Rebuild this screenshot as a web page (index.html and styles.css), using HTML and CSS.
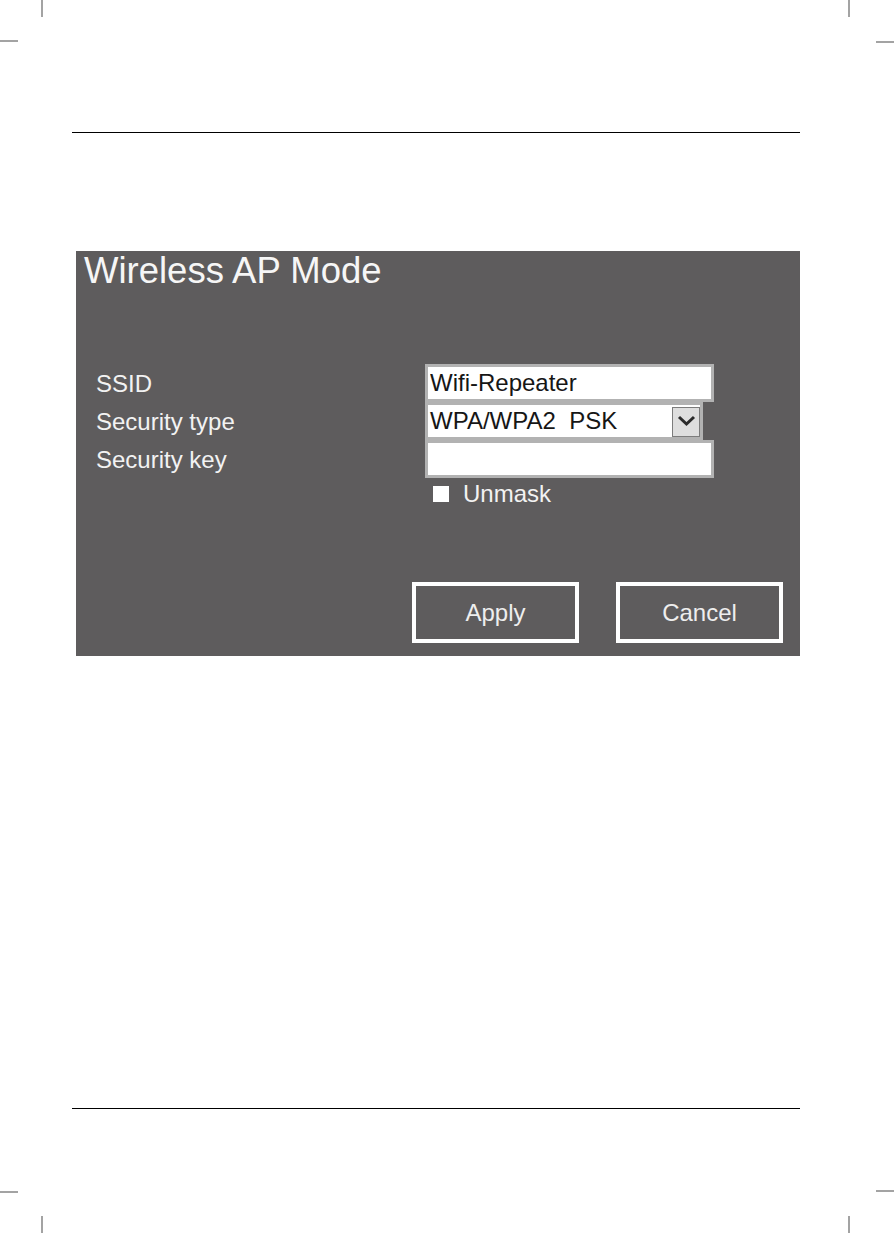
FILE: index.html
```html
<!DOCTYPE html>
<html lang="en">
<head>
  <meta charset="UTF-8" />
  <meta name="viewport" content="width=device-width, initial-scale=1.0"/>
  <title>Wireless AP Mode</title>
  <link rel="stylesheet" href="styles.css">
</head>
<body>
  <!-- crop marks at the corners of the printed page -->
  <span class="mark mark-v tl-v"></span>
  <span class="mark mark-h tl-h"></span>
  <span class="mark mark-v tr-v"></span>
  <span class="mark mark-h tr-h"></span>
  <span class="mark mark-h bl-h"></span>
  <span class="mark mark-v bl-v"></span>
  <span class="mark mark-h br-h"></span>
  <span class="mark mark-v br-v"></span>

  <div class="sheet">
    <div class="rule"></div>

    <div class="panel">
      <h1 class="panel-title">Wireless AP Mode</h1>

      <form class="ap-form" id="apForm">
        <label class="label" for="ssid">SSID</label>
        <input class="field" type="text" id="ssid" value="Wifi-Repeater" />

        <label class="label">Security type</label>
        <div class="select">
          <span class="select-value">WPA/WPA2&nbsp;&nbsp;PSK</span>
          <span class="select-arrow">
            <svg width="28" height="30" viewBox="0 0 28 30">
              <polyline points="7,10 14.5,17 22,10" fill="none" stroke="#2b2b2b" stroke-width="3"/>
            </svg>
          </span>
        </div>

        <label class="label" for="key">Security key</label>
        <input class="field" type="password" id="key" value="" />

        <div class="unmask">
          <span class="check"></span>
          <span>Unmask</span>
        </div>
      </form>

      <div class="buttons">
        <button type="button" class="btn">Apply</button>
        <button type="button" class="btn">Cancel</button>
      </div>
    </div>

    <div class="rule rule-bottom"></div>
  </div>
</body>
</html>
```

FILE: styles.css
```css
body {
  margin: 0;
  width: 894px;
  height: 1233px;
  position: relative;
  background: #fff;
  font-family: "Liberation Sans", Arial, sans-serif;
  overflow: hidden;
}

.mark {
  position: absolute;
  background: #a3a3a3;
}

.mark-v {
  width: 2px;
  height: 17px;
}

.mark-h {
  width: 18px;
  height: 2px;
}

.tl-v { left: 41px; top: 0; }
.tl-h { left: 0; top: 40px; }
.tr-v { left: 848px; top: 0; }
.tr-h { left: 876px; top: 41px; }
.bl-h { left: 0; top: 1191px; }
.bl-v { left: 41px; top: 1216px; }
.br-h { left: 876px; top: 1190px; }
.br-v { left: 848px; top: 1216px; }

.sheet {
  padding: 132px 0 0 72px;
}

.rule {
  width: 728px;
  height: 1px;
  background: #000;
}

.rule-bottom {
  margin-top: 452px;
}

.panel {
  margin: 118px 0 0 4px;
  width: 724px;
  height: 405px;
  box-sizing: border-box;
  padding: 0 0 0 20px;
  background: #5e5c5d;
  color: #f2f2f2;
}

.panel-title {
  margin: 0 0 0 -12px;
  font-size: 36.5px;
  font-weight: normal;
  line-height: 40px;
  color: #f6f6f6;
}

.ap-form {
  margin-top: 73px;
  display: grid;
  grid-template-columns: 329px 289px;
  grid-template-rows: 38px 38px 38px 29px;
}

.label {
  font-size: 24px;
  line-height: 38px;
  padding-top: 1px;
}

.field {
  box-sizing: border-box;
  width: 289px;
  height: 38px;
  margin: 0;
  padding: 0 0 0 2px;
  border: 3px solid #b2b2b2;
  background: #fff;
  font-family: "Liberation Sans", Arial, sans-serif;
  font-size: 24px;
  color: #161616;
  outline: none;
}

.select {
  box-sizing: border-box;
  width: 278px;
  height: 38px;
  display: flex;
  border: 3px solid #b2b2b2;
  background: #fff;
}

.select-value {
  flex: 1;
  padding-left: 2px;
  font-size: 24px;
  line-height: 32px;
  color: #161616;
}

.select-arrow {
  box-sizing: border-box;
  width: 28px;
  height: 30px;
  margin-top: 2px;
  background: #dedede;
  border: 1px solid #7c7c7c;
}

.select-arrow svg {
  display: block;
  margin: -1px;
}

.unmask {
  grid-column: 2;
  display: flex;
  align-items: center;
  gap: 14px;
  padding: 3px 0 0 8px;
  height: 26px;
  font-size: 24px;
  line-height: 26px;
}

.check {
  width: 16px;
  height: 16px;
  background: #fff;
}

.buttons {
  margin: 75px 0 0 316px;
  display: flex;
  gap: 37px;
}

.btn {
  box-sizing: border-box;
  width: 167px;
  height: 61px;
  padding: 0;
  border: 4px solid #fff;
  background: transparent;
  color: #eeeeee;
  font-family: "Liberation Sans", Arial, sans-serif;
  font-size: 24px;
}
```
